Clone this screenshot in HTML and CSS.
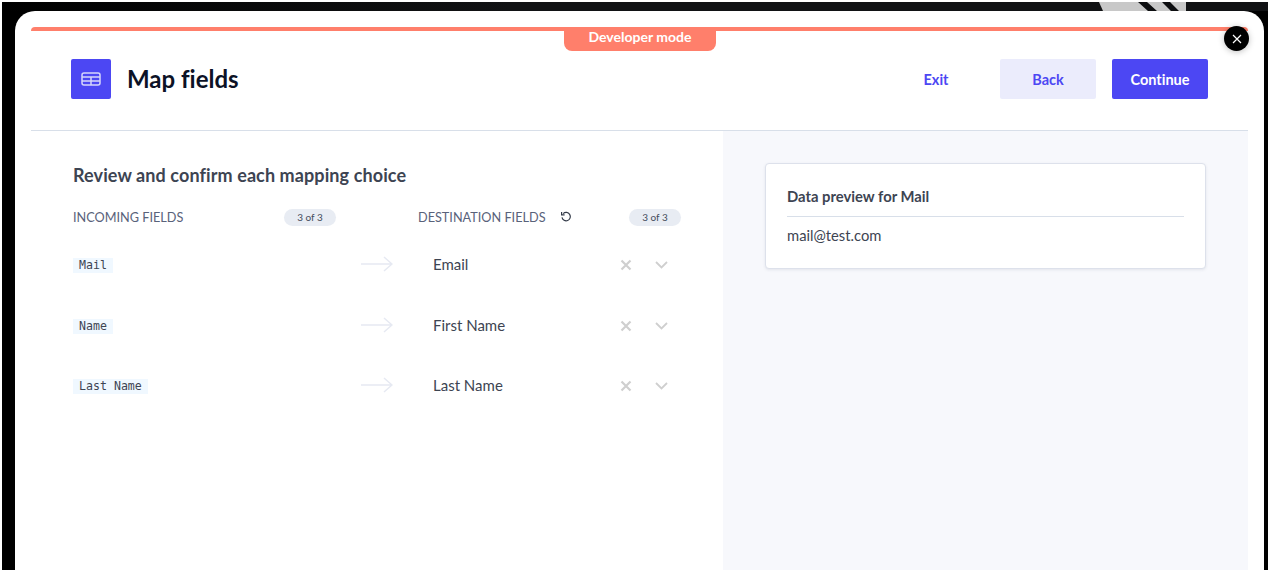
FILE: index.html
```html
<!DOCTYPE html>
<html lang="en">
<head>
<meta charset="utf-8">
<title>Map fields</title>
<link rel="stylesheet" href="styles.css">
</head>
<body>
<div class="backdrop">
  <svg class="backdrop-art" width="87" height="9" viewBox="0 0 87 9"><path d="M0 0H87V9H4Z" fill="#c8c8c8"/><path d="M39 0H48L58 9H49ZM63 0H71L80 9H72Z" fill="#0d0e10"/></svg>
  <main class="modal">
    <div class="stripe"></div>
    <div class="dev-badge">Developer mode</div>
    <button class="close" aria-label="Close"><svg width="10" height="10" viewBox="0 0 10 10"><path d="M1 1L9 9M9 1L1 9" stroke="#fff" stroke-width="1.2" fill="none"/></svg></button>
    <header class="head">
      <div class="title-group">
        <div class="icon-box"><svg width="20" height="14" viewBox="0 0 20 14"><rect x="1" y="1" width="18" height="12" rx="2" fill="none" stroke="#d5d6fb" stroke-width="1.5"/><path d="M1 5H19M1 9H19M10 5V13" stroke="#d5d6fb" stroke-width="1.5" fill="none"/></svg></div>
        <h1>Map fields</h1>
      </div>
      <div class="actions">
        <button class="btn btn-exit">Exit</button>
        <button class="btn btn-back">Back</button>
        <button class="btn btn-go">Continue</button>
      </div>
    </header>
    <div class="body">
      <section class="mapping">
        <h2>Review and confirm each mapping choice</h2>
        <div class="cols">
          <div class="col-head left"><span>INCOMING FIELDS</span><span class="pill">3 of 3</span></div>
          <div class="col-head right"><span>DESTINATION FIELDS</span>
            <svg class="undo" width="12" height="12" viewBox="0 0 12 12"><path d="M3.2 2.6A4.2 4.2 0 1 1 2 6.4" fill="none" stroke="#333a48" stroke-width="1.2"/><path d="M1.6 0.9V3.8H4.6" fill="none" stroke="#333a48" stroke-width="1.2"/></svg>
            <span class="pill pill-end">3 of 3</span></div>
        </div>
        <div class="row">
          <div class="src"><code>Mail</code></div>
          <svg class="arrow" width="32" height="16" viewBox="0 0 32 16"><path d="M0 8H30M23 1L31 8L23 15" fill="none" stroke="#e6e9f2" stroke-width="1.5"/></svg>
          <div class="dest">Email</div>
          <svg class="x" width="12" height="12" viewBox="0 0 12 12"><path d="M1.5 1.5L10.5 10.5M10.5 1.5L1.5 10.5" stroke="#cfcfcf" stroke-width="2.2" fill="none"/></svg>
          <svg class="chev" width="13" height="8" viewBox="0 0 13 8"><path d="M1 1L6.5 6.5L12 1" stroke="#cfcfcf" stroke-width="1.8" fill="none"/></svg>
        </div>
        <div class="row">
          <div class="src"><code>Name</code></div>
          <svg class="arrow" width="32" height="16" viewBox="0 0 32 16"><path d="M0 8H30M23 1L31 8L23 15" fill="none" stroke="#e6e9f2" stroke-width="1.5"/></svg>
          <div class="dest">First Name</div>
          <svg class="x" width="12" height="12" viewBox="0 0 12 12"><path d="M1.5 1.5L10.5 10.5M10.5 1.5L1.5 10.5" stroke="#cfcfcf" stroke-width="2.2" fill="none"/></svg>
          <svg class="chev" width="13" height="8" viewBox="0 0 13 8"><path d="M1 1L6.5 6.5L12 1" stroke="#cfcfcf" stroke-width="1.8" fill="none"/></svg>
        </div>
        <div class="row">
          <div class="src"><code>Last Name</code></div>
          <svg class="arrow" width="32" height="16" viewBox="0 0 32 16"><path d="M0 8H30M23 1L31 8L23 15" fill="none" stroke="#e6e9f2" stroke-width="1.5"/></svg>
          <div class="dest">Last Name</div>
          <svg class="x" width="12" height="12" viewBox="0 0 12 12"><path d="M1.5 1.5L10.5 10.5M10.5 1.5L1.5 10.5" stroke="#cfcfcf" stroke-width="2.2" fill="none"/></svg>
          <svg class="chev" width="13" height="8" viewBox="0 0 13 8"><path d="M1 1L6.5 6.5L12 1" stroke="#cfcfcf" stroke-width="1.8" fill="none"/></svg>
        </div>
      </section>
      <aside class="preview">
        <div class="card">
          <h3>Data preview for Mail</h3>
          <p>mail@test.com</p>
        </div>
      </aside>
    </div>
  </main>
</div>
</body>
</html>
```
FILE: styles.css
```css
* { box-sizing: border-box; }
html, body { margin: 0; height: 100%; background: #fff; overflow: hidden; }
body { font-family: Lato, "Liberation Sans", sans-serif; color: #3d4452; font-variant-ligatures: none; }
.backdrop { position: relative; margin: 2px; height: 568px; background: #000; padding: 9px 4px 0 13px; }
.backdrop::before { content: ""; position: absolute; left: 0; right: 0; top: 0; height: 9px; background: linear-gradient(90deg, #000, #111214 40%); }
.backdrop-art { position: absolute; left: 1097px; top: 0; }
.modal { position: relative; height: 559px; background: #fff; border-radius: 20px 20px 0 0; padding: 16px 16px 0; display: flex; flex-direction: column; }
.stripe { height: 4px; background: #ff7f6b; border-radius: 4px 4px 0 0; flex: none; }
.dev-badge { position: absolute; left: 549px; top: 16px; width: 152px; height: 24px; padding-top: 1px; background: #ff7f6b; color: #fff; font-size: 14px; font-weight: 700; text-align: center; border-radius: 0 0 8px 8px; }
.close { position: absolute; right: 15px; top: 15px; width: 25px; height: 25px; border-radius: 50%; background: #000; border: 0; padding: 0; display: flex; align-items: center; justify-content: center; box-shadow: 0 1px 6px rgba(0,0,0,.25); }
.head { height: 100px; flex: none; display: flex; align-items: center; justify-content: space-between; padding: 0 40px 3px 40px; border-bottom: 1px solid #d8dfe9; }
.title-group { display: flex; align-items: center; gap: 16px; }
.icon-box { width: 40px; height: 40px; background: #4c47f3; border-radius: 2px; display: flex; align-items: center; justify-content: center; }
h1 { margin: 0 0 2px; font-size: 24px; font-weight: 700; color: #0c1226; }
.actions { display: flex; gap: 16px; }
.btn { height: 40px; width: 96px; border: 0; border-radius: 2px; font: 700 14.5px Lato, sans-serif; padding: 0; font-variant-ligatures: none; }
.btn-exit { background: #fff; color: #4c47f3; }
.btn-back { background: #ebecfc; color: #4c47f3; }
.btn-go { background: #4c47f3; color: #fff; }
.body { flex: 1; display: flex; min-height: 0; }
.mapping { width: 692px; padding: 33px 42px 0; }
h2 { margin: 0; font-size: 18px; line-height: 22px; font-weight: 700; letter-spacing: .1px; color: #3d4452; }
.cols { display: flex; margin: 21px 0 7px; height: 20px; align-items: center; }
.col-head { display: flex; align-items: center; font-size: 12.7px; color: #59627a; }
.col-head.left { width: 263px; justify-content: space-between; margin-right: 82px; }
.col-head.right { width: 263px; }
.pill { font-size: 10px; line-height: 17px; width: 52px; text-align: center; background: #e8ecf3; border-radius: 9px; color: #454c5c; }
.undo { margin-left: 14px; }
.pill-end { margin-left: auto; }
.row { height: 60.5px; display: flex; align-items: center; }
.src { width: 288px; margin-bottom: 2px; }
code { font: 11.6px/15px "DejaVu Sans Mono", monospace; background: #f0f8ff; color: #3d4452; padding: 0 6px; display: inline-block; }
.arrow { flex: none; }
.dest { width: 187px; margin-left: 40px; font-size: 15px; color: #3d4452; }
.x { flex: none; margin: 2px 23px 0 0; }
.chev { flex: none; margin-top: 2px; }
.preview { flex: 1; background: #f7f8fc; padding: 32px 42px 0; }
.card { height: 106px; background: #fff; border: 1px solid #dde1eb; border-radius: 4px; box-shadow: 0 1px 3px rgba(50,60,90,.1); padding: 0 21px; }
h3 { margin: 0; height: 53px; padding-top: 23px; font-size: 14.8px; line-height: 18px; font-weight: 700; color: #3d4452; border-bottom: 1px solid #d8dfe9; }
.card p { margin: 8px 0 0; font-size: 14.75px; line-height: 20px; color: #3d4452; }
```
